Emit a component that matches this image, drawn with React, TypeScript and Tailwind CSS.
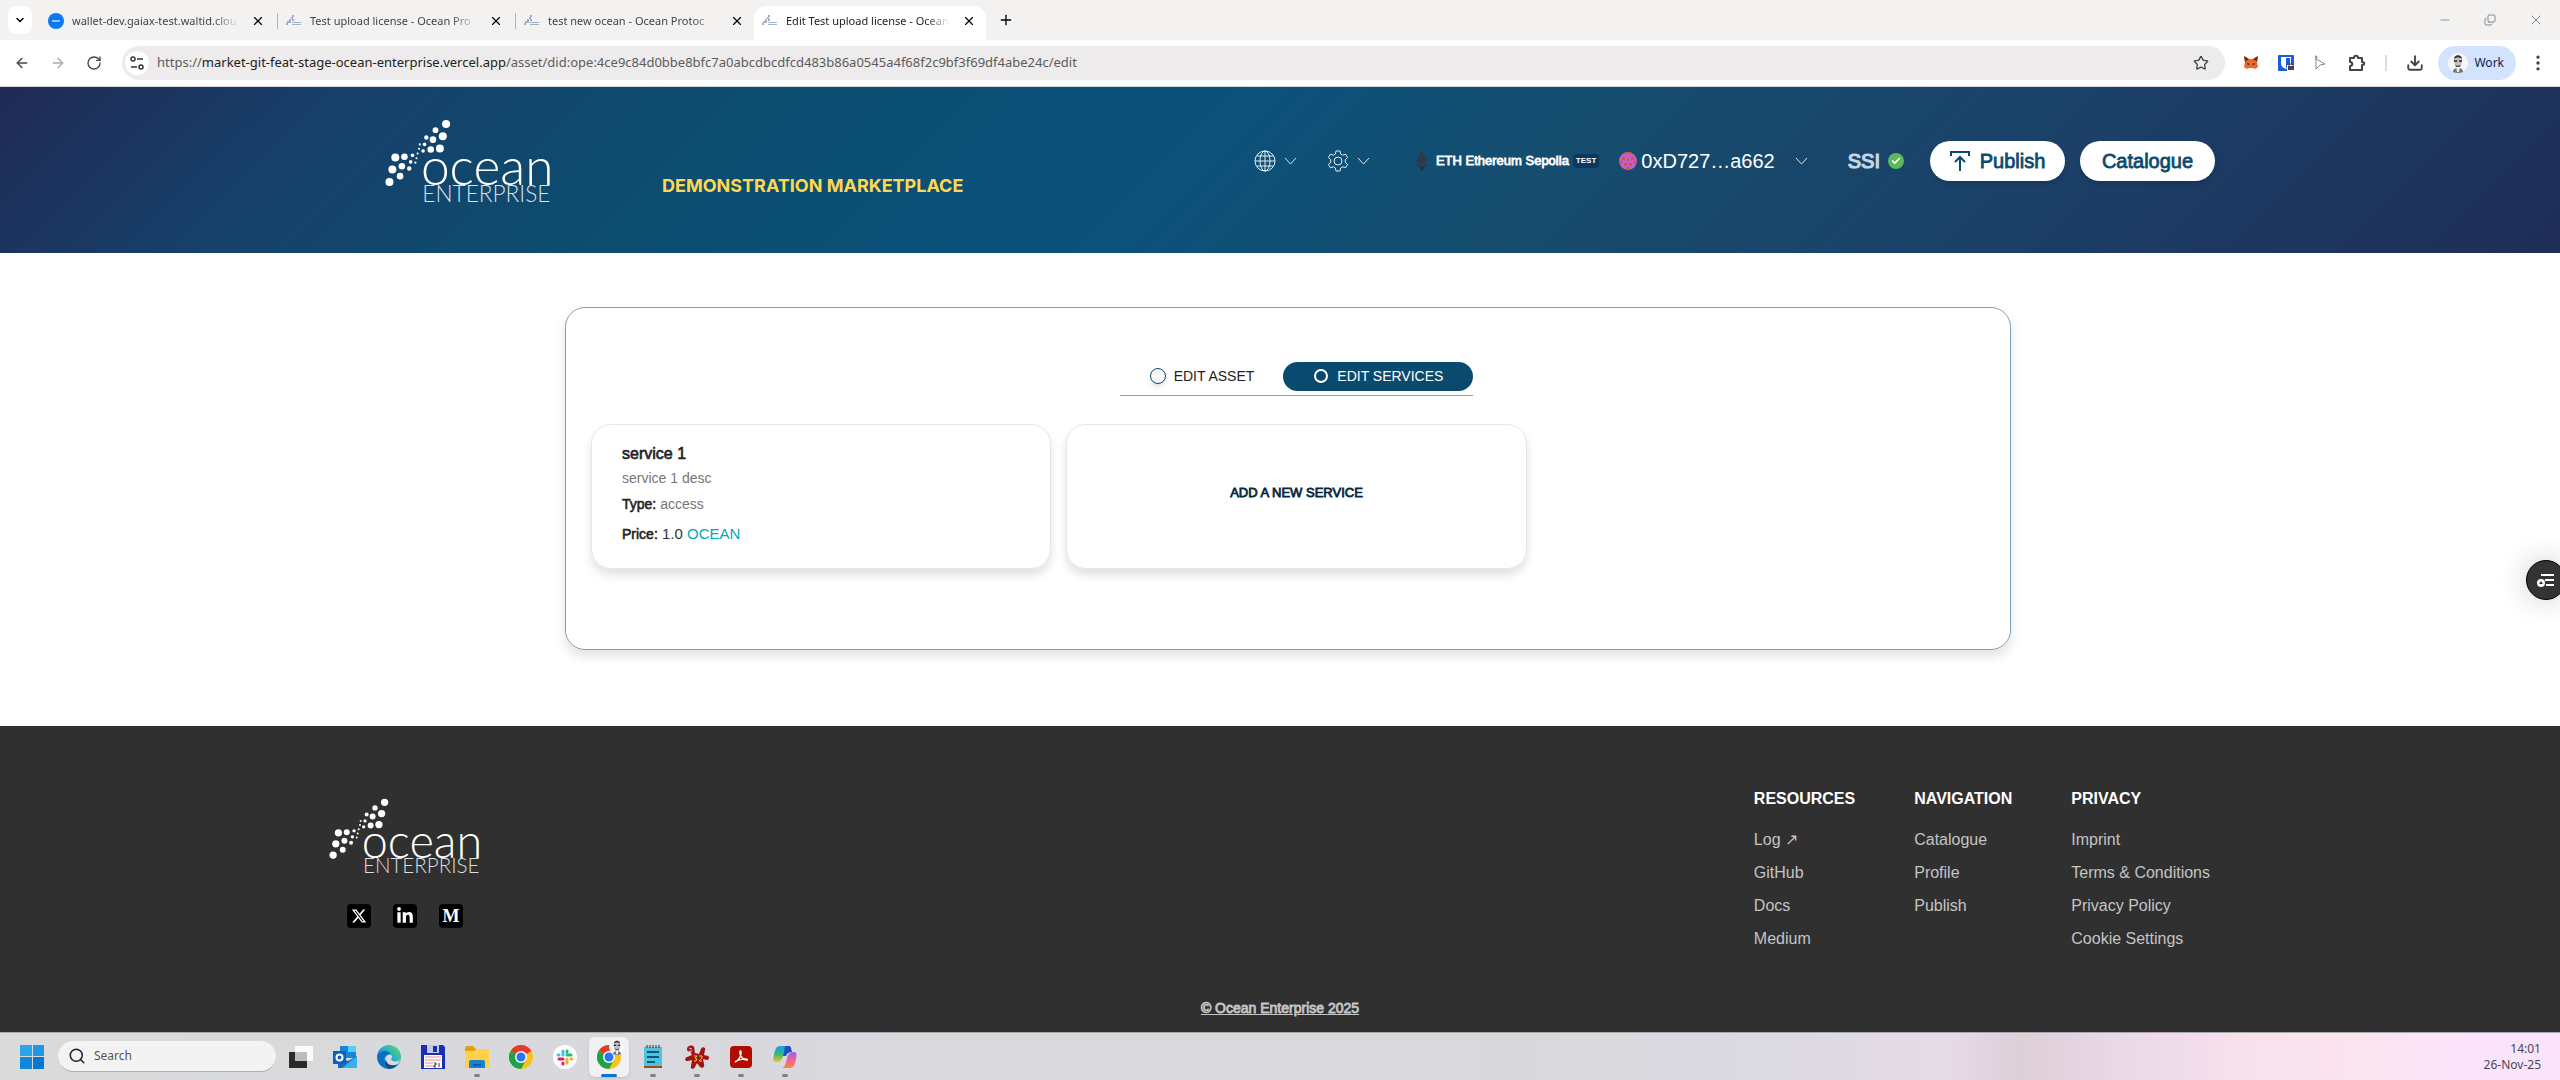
import type { ReactNode } from "react";
import {
  ArrowLeft,
  ArrowRight,
  Check,
  ChevronDown,
  Copy,
  Download,
  EllipsisVertical,
  Minus,
  Plus,
  RotateCw,
  Search,
  Star,
  X,
} from "lucide-react";
import { FaLinkedinIn, FaXTwitter } from "react-icons/fa6";

const LOGO_DOTS = [
  [255, 66, 11], [226, 83, 8], [246, 100, 11], [201, 103, 6], [219, 109, 9],
  [238, 133, 11], [213, 136, 9], [196, 122, 5], [192, 140, 5], [183, 122, 3],
  [181, 134, 3], [177, 147, 3], [174, 160, 3], [171, 172, 3], [163, 152, 5],
  [158, 170, 5], [154, 188, 6], [141, 156, 9], [134, 182, 9], [129, 209, 9],
  [116, 158, 11], [108, 191, 11], [100, 225, 11],
];

const TABS = [
  { title: "wallet-dev.gaiax-test.waltid.clou", wallet: true },
  { title: "Test upload license - Ocean Pro" },
  { title: "test new ocean - Ocean Protoc" },
  { title: "Edit Test upload license - Ocean", active: true },
];

const FOOTER_COLUMNS = [
  { title: "RESOURCES", links: ["Log ↗", "GitHub", "Docs", "Medium"] },
  { title: "NAVIGATION", links: ["Catalogue", "Profile", "Publish"] },
  {
    title: "PRIVACY",
    links: ["Imprint", "Terms & Conditions", "Privacy Policy", "Cookie Settings"],
  },
];

function OceanLogo({ className }: { className: string }) {
  return (
    <svg viewBox="85 50 460 235" className={`overflow-visible ${className}`} fill="#fff" role="img" aria-label="Ocean Enterprise">
      {LOGO_DOTS.map(([cx, cy, r]) => (
        <circle key={`${cx}-${cy}`} cx={cx} cy={cy} r={r} />
      ))}
      <text x="186" y="233" fontSize="141" fontWeight="300" fontFamily="Lato, sans-serif">
        ocean
      </text>
      <text x="190" y="280" fontSize="62" fontWeight="300" fontFamily="Lato, sans-serif" fillOpacity="0.85">
        ENTERPRISE
      </text>
    </svg>
  );
}

function OceanFavicon() {
  return (
    <svg viewBox="0 0 16 16" className="size-4 shrink-0" fill="#7f93b8">
      <circle cx="7" cy="3" r="1" />
      <circle cx="6" cy="5" r="1" />
      <circle cx="7" cy="7" r="1" />
      <circle cx="4" cy="7" r="1" />
      <circle cx="2" cy="9" r="1" />
      <circle cx="1" cy="11" r="1" />
      <circle cx="4" cy="9" r="1" />
      <path d="M6 9h9v1H6zM6 11h9v1H6z" opacity=".7" />
    </svg>
  );
}

function TabStrip() {
  return (
    <div className="flex h-10 items-end bg-[#f3f2f1] pl-2">
      <button aria-label="Search tabs" className="mr-2 mb-1.5 flex h-7 w-6 items-center justify-center rounded-lg bg-white">
        <ChevronDown className="size-3" strokeWidth={3} />
      </button>
      {TABS.map((tab, i) => (
        <div
          key={tab.title}
          className={`flex h-[34px] items-center gap-2 pr-2.5 pb-1 pl-2 ${
            tab.active ? "w-[232px] rounded-t-xl bg-white" : "w-[238px]"
          }`}
        >
          {tab.wallet ? (
            <span className="flex size-4 shrink-0 items-center justify-center rounded-full bg-[#0a78f0]">
              <span className="h-0.5 w-2 bg-[#8cc4ff]" />
            </span>
          ) : (
            <OceanFavicon />
          )}
          <span
            className={`min-w-0 flex-1 whitespace-nowrap text-[11px] [mask-image:linear-gradient(to_right,#000_85%,transparent)] ${
              tab.active ? "text-[#222]" : "text-[#444]"
            }`}
          >
            {tab.title}
          </span>
          <button aria-label="Close tab" className="ml-1 shrink-0">
            <X className="size-3.5" />
          </button>
          {i < 2 && <span className="-mr-2.5 ml-1 h-4 w-px bg-[#b5b5b5]" />}
        </div>
      ))}
      <button aria-label="New tab" className="mb-3 ml-3">
        <Plus className="size-4" />
      </button>
      <div className="mr-4 mb-3 ml-auto flex items-center gap-8 text-[#888]">
        <button aria-label="Minimize">
          <Minus className="size-3.5" strokeWidth={1.5} />
        </button>
        <button aria-label="Restore">
          <Copy className="size-3 -scale-y-100" strokeWidth={2} />
        </button>
        <button aria-label="Close">
          <X className="size-4" strokeWidth={1.5} />
        </button>
      </div>
    </div>
  );
}

function Toolbar() {
  return (
    <div className="flex h-[47px] items-center border-b border-[#d8d8d8] bg-white pr-3 pl-3.5 text-[#444]">
      <button aria-label="Back" className="mr-5">
        <ArrowLeft className="size-4" />
      </button>
      <button aria-label="Forward" className="mr-5 text-[#aaa]">
        <ArrowRight className="size-4" />
      </button>
      <button aria-label="Reload" className="mr-5">
        <RotateCw className="size-4" />
      </button>
      <div className="flex h-[34px] flex-1 items-center rounded-full bg-[#edebec] pr-4 pl-[3px]">
        <span className="mr-2 flex size-6 items-center justify-center rounded-full bg-white">
          <svg viewBox="0 0 16 16" className="size-4" fill="none" stroke="#333" strokeWidth="1.5">
            <circle cx="4" cy="4" r="2" />
            <path d="M8 4h6M2 12h6" />
            <circle cx="12" cy="12" r="2" />
          </svg>
        </span>
        <span className="flex-1 text-[13px] text-[#5c5c5c]">
          https://<span className="text-[#222]">market-git-feat-stage-ocean-enterprise.vercel.app</span>
          /asset/did:ope:4ce9c84d0bbe8bfc7a0abcdbcdfcd483b86a0545a4f68f2c9bf3f69df4abe24c/edit
        </span>
        <button aria-label="Bookmark">
          <Star className="size-4" />
        </button>
      </div>
      <div className="ml-[18px] flex items-center gap-[19px]">
        <svg viewBox="0 0 16 16" className="size-4">
          <path d="M1 1l5 3h4l5-3-1 6 1 5-3 2-2-1H6l-2 1-3-2 1-5z" fill="#f0652a" />
          <path d="M1 1l5 3-4 3zM15 1l-5 3 4 3z" fill="#7a2a18" />
          <path d="M4 8l3 1-2 1zM12 8L9 9l2 1z" fill="#222" />
        </svg>
        <svg viewBox="0 0 16 16" className="size-4">
          <rect width="16" height="16" rx="1" fill="#175ddc" />
          <path d="M3 2h10v6c0 4-3 5-5 6-2-1-5-2-5-6z" fill="#fff" />
          <path d="M8 3h4v5c0 2-2 4-4 5z" fill="#175ddc" />
          <path d="M9 10h7v6H9z" fill="#fff" />
          <path d="M10 11h6v4h-6z" fill="#444" />
          <path d="M11 11V9h4v2" fill="none" stroke="#444" />
        </svg>
        <svg viewBox="0 0 16 16" className="size-4" fill="none">
          <path d="M2 0l3 2-3 3z" fill="#b27cc4" />
          <path d="M3 4l9 5-5 1-4 4z" stroke="#888" />
        </svg>
        <svg viewBox="0 0 18 18" className="size-[18px]" fill="none" stroke="#444" strokeWidth="2">
          <path d="M2 4h4c0-3 4-3 4 0h4v4c3 0 3 3 0 3v5H2v-4c3 0 3-4 0-4z" strokeLinejoin="round" />
        </svg>
        <span className="h-4 w-0.5 bg-[#ddd]" />
        <Download className="size-[18px]" strokeWidth={2.5} />
      </div>
      <button className="ml-3.5 flex h-[34px] items-center gap-1.5 rounded-full bg-[#d3e3fd] pr-3 pl-2.5 text-xs text-[#0a2351]">
        <PersonPhoto className="size-5" />
        Work
      </button>
      <button aria-label="Menu" className="ml-3">
        <EllipsisVertical className="size-5" />
      </button>
    </div>
  );
}

function PersonPhoto({ className }: { className: string }) {
  return (
    <svg viewBox="0 0 20 20" className={className}>
      <circle cx="10" cy="10" r="10" fill="#f7f7f7" />
      <path d="M5 19c0-3 2-4 5-4s5 1 5 4c-3 1.300-7 1.300-10 0z" fill="#777" />
      <path d="M8 13h4l-1 6h-2z" fill="#eee" />
      <ellipse cx="10" cy="8" rx="4" ry="6" fill="#c4c4c4" />
      <path d="M6 6c0-5 8-5 8 0-2-2-6-2-8 0z" fill="#333" />
      <path d="M6 8h3M11 8h3" stroke="#222" strokeWidth="1.5" />
      <path d="M7 11c1 2 5 2 6 0l-1 3h-4z" fill="#555" />
    </svg>
  );
}

function Chevron() {
  return (
    <svg viewBox="0 0 13 8" className="h-2 w-[13px]" fill="none" stroke="#dce6ee">
      <path d="M1 1l5.500 6L12 1" />
    </svg>
  );
}

function SiteHeader() {
  return (
    <header className="bg-[linear-gradient(135deg,#202a54_0%,#16406a_13%,#0c4d70_28%,#0b527b_45%,#164d6f_60%,#1b4068_78%,#1f2d56_100%)] pl-[39px]">
      <div className="mx-auto flex h-[166px] max-w-[1831px] items-start justify-between text-white">
        <div className="flex">
          <a href="#home" className="mt-[31px]">
            <OceanLogo className="h-[86px] w-[168px]" />
          </a>
          <span className="mt-[87px] ml-[110px] text-lg leading-6 font-bold text-[#ffd84f] [font-family:Inter,sans-serif]">
            DEMONSTRATION MARKETPLACE
          </span>
        </div>
        <div className="mt-[54px] flex h-10 items-center">
          <button aria-label="Language" className="flex items-center gap-2">
            <svg viewBox="0 0 22 22" className="size-[22px]" fill="none" stroke="#e4edf3">
              <circle cx="11" cy="11" r="10" />
              <ellipse cx="11" cy="11" rx="5" ry="10" />
              <path d="M11 1v20M1 11h20M3 6h16M3 16h16" />
            </svg>
            <Chevron />
          </button>
          <button aria-label="Settings" className="ml-[30px] flex items-center gap-2">
            <svg viewBox="0 0 22 22" className="size-[22px]" fill="none" stroke="#e4edf3" strokeLinejoin="round">
              <circle cx="11" cy="11" r="4" />
              <path d="M9 1h4l.6 3 2 1.200 3-1 2 3.400-2.300 2v2.800l2.300 2-2 3.400-3-1-2 1.200-.6 3H9l-.6-3-2-1.200-3 1-2-3.400 2.300-2V9.600l-2.300-2 2-3.400 3 1 2-1.200z" />
            </svg>
            <Chevron />
          </button>
          <div className="ml-[46px] flex items-center">
            <svg viewBox="0 0 12 20" className="mr-2 h-5 w-3">
              <path d="M6 0l6 10-6 4-6-4z" fill="#2f3a44" />
              <path d="M0 12l6 4 6-4-6 8z" fill="#27323c" />
            </svg>
            <span className="text-[13px] [-webkit-text-stroke:0.06em]">ETH Ethereum Sepolia</span>
            <span className="ml-1 rounded-sm bg-[#073a63] px-[3px] text-[8px] leading-[14px] font-bold">TEST</span>
          </div>
          <button className="ml-5 flex items-center text-xl">
            <svg viewBox="0 0 18 18" className="mr-1 size-[18px]">
              <circle cx="9" cy="9" r="9" fill="#c45fc9" />
              <path d="M6 0h6v2H6zM3 5h3v3H3zM12 5h3v3h-3zM8 6h2v3H8zM0 9h3v3H0zM15 9h3v3h-3zM5 11h3v3H5zM10 11h3v3h-3zM7 15h4v3H7z" fill="#d4553a" />
            </svg>
            0xD727…a662
            <span className="ml-5">
              <Chevron />
            </span>
          </button>
          <span className="ml-10 text-xl text-[#c5d6e6] [-webkit-text-stroke:0.06em]">SSI</span>
          <span className="ml-2 flex size-4 items-center justify-center rounded-full bg-[#5cb85c]">
            <Check className="size-2.5" strokeWidth={4} />
          </span>
          <a href="#publish" className="ml-[26px] flex h-10 w-[135px] items-center justify-center gap-2.5 rounded-full bg-white text-xl text-[#0b4a6f] shadow-md [-webkit-text-stroke:0.04em]">
            <svg viewBox="0 0 20 22" className="h-[22px] w-5" fill="none" stroke="#0b4a6f" strokeWidth="2">
              <path d="M1 6V2h18v4M10 21V7M5 12l5-5 5 5" />
            </svg>
            Publish
          </a>
          <a href="#catalogue" className="ml-[15px] flex h-10 w-[135px] items-center justify-center rounded-full bg-white text-xl text-[#0b4a6f] shadow-md [-webkit-text-stroke:0.04em]">
            Catalogue
          </a>
        </div>
      </div>
    </header>
  );
}

function EditPanel() {
  return (
    <main className="bg-white pt-[54px] pb-[76px] pl-4">
      <section className="mx-auto max-w-[1446px] rounded-[20px] border border-[#7fa0b5] pt-[54px] pr-2 pb-20 pl-[25px] shadow-[0_6px_12px_rgba(0,0,0,0.12)]">
        <div className="mx-auto flex w-fit items-center border-b border-[#7fa0b5] pb-1 text-sm">
          <button className="flex h-[29px] items-center gap-2 pr-[29px] pb-0.5 pl-[30px] text-[#222]">
            <span className="size-4 rounded-full border border-[#0b4a6f] bg-[#f7f7f7] shadow-md" />
            EDIT ASSET
          </button>
          <button className="flex h-[29px] items-center gap-[9px] rounded-full bg-[#0b4a6f] pr-[30px] pb-0.5 pl-[31px] text-white">
            <span className="size-3.5 rounded-full border-2 border-white shadow-md" />
            EDIT SERVICES
          </button>
        </div>
        <div className="mt-[28px] grid grid-cols-3 gap-[15px]">
          <button className="flex flex-col items-start rounded-[20px] border border-[#e6e6e6] px-[30px] pt-[17px] pb-[18px] text-left shadow-[0_6px_10px_rgba(0,0,0,0.12)]">
            <span className="text-base text-[#222] [-webkit-text-stroke:0.04em]">service 1</span>
            <span className="text-sm leading-6 text-[#767676]">service 1 desc</span>
            <span className="text-sm leading-7 text-[#767676]">
              <span className="text-[#222] [-webkit-text-stroke:0.04em]">Type:</span> access
            </span>
            <span className="text-[15px] leading-8 text-[#333]">
              <span className="text-sm text-[#222] [-webkit-text-stroke:0.04em]">Price:</span> 1.0{" "}
              <span className="text-[#00a9b5]">OCEAN</span>
            </span>
          </button>
          <button className="rounded-[20px] border border-[#e6e6e6] pb-2 text-[13px] text-[#06283f] shadow-[0_6px_10px_rgba(0,0,0,0.12)] [-webkit-text-stroke:0.06em]">
            ADD A NEW SERVICE
          </button>
        </div>
      </section>
    </main>
  );
}

function SocialLink({ label, children }: { label: string; children: ReactNode }) {
  return (
    <a href="#social" aria-label={label} className="flex size-6 items-center justify-center rounded-sm bg-black">
      {children}
    </a>
  );
}

function SiteFooter() {
  return (
    <footer className="flex flex-1 flex-col bg-[#303030] text-[#c4c4c4]">
      <div className="mx-auto flex w-full max-w-[1904px] justify-between pt-[61px]">
        <div className="mt-[10px]">
          <OceanLogo className="h-[78px] w-[153px]" />
          <div className="mt-[29px] ml-[19px] flex gap-[22px] text-white">
            <SocialLink label="X">
              <FaXTwitter className="size-4" />
            </SocialLink>
            <SocialLink label="LinkedIn">
              <FaLinkedinIn className="size-[18px]" />
            </SocialLink>
            <SocialLink label="Medium">
              <span className="text-lg leading-5 font-bold [font-family:'Liberation_Serif',serif]">M</span>
            </SocialLink>
          </div>
        </div>
        <nav className="mr-[22px] flex gap-[59px]">
          {FOOTER_COLUMNS.map((column) => (
            <div key={column.title}>
              <h3 className="text-base font-bold text-white">{column.title}</h3>
              <ul className="mt-3">
                {column.links.map((link) => (
                  <li key={link} className="leading-[33px]">
                    <a href="#link">{link}</a>
                  </li>
                ))}
              </ul>
            </div>
          ))}
        </nav>
      </div>
      <a href="#home" className="mx-auto mt-auto mb-[14px] text-sm leading-5 underline [-webkit-text-stroke:0.06em]">
        © Ocean Enterprise 2025
      </a>
    </footer>
  );
}

function ChromeIcon() {
  return (
    <svg viewBox="0 0 24 24" className="size-6">
      <circle cx="12" cy="12" r="12" fill="#fbc116" />
      <path d="M12 12L1.600 6A12 12 0 0122.400 6z" fill="#e33b2e" />
      <path d="M12 12L1.600 6A12 12 0 0012 24l5-9z" fill="#1fa34a" />
      <circle cx="12" cy="12" r="6" fill="#fff" />
      <circle cx="12" cy="12" r="4.500" fill="#2a75f0" />
    </svg>
  );
}

const TASKBAR_APPS: { name: string; icon: ReactNode; open?: boolean; active?: boolean }[] = [
  {
    name: "Task view",
    icon: (
      <svg viewBox="0 0 24 24" className="size-6">
        <path d="M0 7h18v16H0z" fill="#2a2a2a" />
        <path d="M6 1h18v15H6z" fill="#fafafa" />
        <path d="M6 7h12v9H6z" fill="#bcbcbc" />
      </svg>
    ),
  },
  {
    name: "Outlook",
    icon: (
      <svg viewBox="0 0 24 24" className="size-6">
        <path d="M7 1h16v12H7z" fill="#1a84d8" />
        <path d="M15 1h8v6h-8z" fill="#50d0f8" />
        <path d="M5 11l10 5 9-5v12H5z" fill="#1568c0" />
        <path d="M24 11v12H9z" fill="#35b1ee" />
        <path d="M0 6h13v13H0z" fill="#0b62b8" />
        <circle cx="6.500" cy="12.500" r="3" fill="none" stroke="#fff" strokeWidth="2" />
      </svg>
    ),
  },
  {
    name: "Edge",
    icon: (
      <svg viewBox="0 0 24 24" className="size-6">
        <defs>
          <linearGradient id="edge" x1="0" x2="1" y1="1" y2="0">
            <stop offset="0" stopColor="#0c59a4" />
            <stop offset=".5" stopColor="#1aa8e0" />
            <stop offset="1" stopColor="#6be04f" />
          </linearGradient>
        </defs>
        <circle cx="12" cy="12" r="12" fill="url(#edge)" />
        <path d="M8 15c0-4 3-6 6-5 2 1 1 3 0 4 1 3 6 3 9 1-2 6-8 9-11 9-3-2-4-5-4-9z" fill="#d9dadf" />
        <path d="M1 10c3-5 10-5 13-1-6-1-9 5-5 12C3 21 0 15 1 10z" fill="#0f6cbd" />
        <path d="M9 14c0 5 5 8 12 5-3 4-7 5-9 5-4-2-5-6-3-10z" fill="#114a8b" />
      </svg>
    ),
  },
  {
    name: "Total Commander",
    icon: (
      <svg viewBox="0 0 24 24" className="size-6">
        <path d="M0 0h22l2 2v22H0z" fill="#1a2fb5" />
        <path d="M6 0h12v8H6z" fill="#c3cbe0" />
        <path d="M12 1h4v6h-4z" fill="#1a2fb5" />
        <path d="M3 10h18v13H3z" fill="#fff" />
        <path d="M4 12h16M4 15h16M4 18h8M4 21h8" stroke="#e88" />
        <path d="M13 18h2v2h-2v2h2M18 18v4" stroke="#333" fill="none" />
      </svg>
    ),
  },
  {
    name: "File Explorer",
    open: true,
    icon: (
      <svg viewBox="0 0 24 24" className="size-6">
        <path d="M0 3c0-1 1-2 2-2h6l3 3h12v8H0z" fill="#e0a010" />
        <path d="M0 6h9l2-2h13v18c0 1-1 1-2 1H1c-1 0-1-1-1-1z" fill="#ffd04a" />
        <path d="M4 23v-6c0-1 1-2 2-2h12c1 0 2 1 2 2v6z" fill="#1782d0" />
        <path d="M8 19h8v2H8z" fill="#0d5ca0" />
      </svg>
    ),
  },
  { name: "Chrome", icon: <ChromeIcon /> },
  {
    name: "Slack",
    icon: (
      <svg viewBox="0 0 24 24" className="size-6" strokeWidth="3" strokeLinecap="round">
        <circle cx="12" cy="12" r="12" fill="#fff" />
        <path d="M10 6v4M5 10h1" stroke="#36c5f0" />
        <path d="M14 10h4M14 6v1" stroke="#2eb67d" />
        <path d="M14 14v4M18 14h1" stroke="#ecb22e" />
        <path d="M6 14h4M10 18v1" stroke="#e01e5a" />
      </svg>
    ),
  },
  {
    name: "Chrome, Work profile",
    open: true,
    active: true,
    icon: (
      <span className="relative">
        <ChromeIcon />
        <span className="absolute -top-1.5 -right-1">
          <PersonPhoto className="size-4" />
        </span>
      </span>
    ),
  },
  {
    name: "Notepad",
    open: true,
    icon: (
      <svg viewBox="0 0 24 24" className="size-6">
        <path d="M3 2h18v19H3z" fill="#4fc3de" />
        <path d="M3 21h18v2H3z" fill="#9a4b1c" />
        <path d="M6 0v3M9 0v3M12 0v3M15 0v3M18 0v3" stroke="#135" />
        <path d="M6 7h12M6 12h12M6 17h8" stroke="#0d5570" strokeWidth="2" />
      </svg>
    ),
  },
  {
    name: "IrfanView",
    open: true,
    icon: (
      <svg viewBox="0 0 24 24" className="size-6">
        <path
          d="M2 4c0-3 5-5 7-2 1 2 0 4 1 6l4 1 2-5c1-3 5-2 4 1l-1 5 4 1c2 1 1 4-1 4l-4-1 1 5c1 3-2 5-4 3l-3-4-2 4c-1 3-5 2-4-1l1-6-4 1c-3 1-4-3-1-4l5-2-2-4c-2 1-3 0-3-2z"
          fill="#a11212"
        />
        <path d="M4 3l3 1M5 6h2" stroke="#f2c9b0" />
        <path d="M9 11h3l-2 2 2 1-1 2H9M14 11h3v2l-3 3h3" fill="none" stroke="#f5d020" />
      </svg>
    ),
  },
  {
    name: "Acrobat",
    open: true,
    icon: (
      <svg viewBox="0 0 24 24" className="size-6">
        <rect width="22" height="22" x="1" y="1" rx="4" fill="#b30b00" />
        <path d="M6 17c3-1 6-5 6-9 0-3-1-3-1 0 0 4 4 7 7 7 2-1-7-2-12 2z" fill="none" stroke="#fff" strokeWidth="1.500" />
      </svg>
    ),
  },
  {
    name: "Copilot",
    open: true,
    icon: (
      <svg viewBox="0 0 24 24" className="size-6">
        <defs>
          <linearGradient id="cpl" x1="0" x2="0" y1="0" y2="1">
            <stop offset="0" stopColor="#1e9df0" />
            <stop offset=".5" stopColor="#35b47a" />
            <stop offset="1" stopColor="#f5c51e" />
          </linearGradient>
          <linearGradient id="cpr" x1="0" x2="0" y1="0" y2="1">
            <stop offset="0" stopColor="#a060e8" />
            <stop offset=".5" stopColor="#f0609a" />
            <stop offset="1" stopColor="#f8873a" />
          </linearGradient>
        </defs>
        <path d="M7 1h8c-3 1-4 5-5 10-1 4-3 6-6 6H3c-3 0-3-3-2-7C2 5 3 1 7 1z" fill="url(#cpl)" />
        <path d="M17 23H9c3-1 4-5 5-10 1-4 3-6 6-6h1c3 0 3 3 2 7-1 5-2 9-6 9z" fill="url(#cpr)" />
        <path d="M12 1h4c2 0 2 2 3 6-3 0-5 1-6 4l-3 0c1-5 2-9 2-10z" fill="#1b4fc4" />
      </svg>
    ),
  },
];

function Taskbar() {
  return (
    <div className="flex h-12 items-center border-t border-[#a9a9ab] bg-[linear-gradient(to_right,#d9dada_0%,#d8d8de_30%,#d9d9dd_60%,#dcd9e2_70%,#e6dbe6_76%,#decfd9_79%,#ead9e6_83%,#f8e2ee_88%,#fbe4ee_92%,#fae4fb_96%,#fae4fb_100%)] pl-5 [font-family:'Noto_Sans',sans-serif]">
      <button aria-label="Start" className="grid size-6 grid-cols-2 gap-px">
        <span className="bg-[#2ba4ee]" />
        <span className="bg-[#1f96e8]" />
        <span className="bg-[#1187dc]" />
        <span className="bg-[#0678d4]" />
      </button>
      <label className="mr-[13px] ml-[14px] flex h-[31px] w-[218px] items-center gap-2 rounded-full border-b border-[#b0b0b0] bg-[#f3f3f4] pl-2.5">
        <Search className="size-[18px] shrink-0 text-[#222]" />
        <input placeholder="Search" className="w-full bg-transparent text-xs placeholder:text-[#555]" />
      </label>
      <div className="flex gap-1">
        {TASKBAR_APPS.map((app, i) => (
          <button
            key={app.name}
            aria-label={app.name}
            className={`relative flex h-10 items-center justify-center rounded-md ${
              i === 0 ? "mr-2 w-6" : "w-10"
            } ${app.active ? "bg-[#f1f1f3] shadow" : ""}`}
          >
            {app.icon}
            {app.open && (
              <span
                className={`absolute bottom-0 h-[3px] rounded-full ${
                  app.active ? "w-4 bg-[#0a74d4]" : "w-1.5 bg-[#808085]"
                }`}
              />
            )}
          </button>
        ))}
      </div>
      <div className="mr-[19px] ml-auto text-right text-xs text-[#4c4650]">
        <div>14:01</div>
        <div>26-Nov-25</div>
      </div>
    </div>
  );
}

export default function App() {
  return (
    <div className="flex min-h-screen flex-col bg-white [font-family:'Liberation_Sans',Arial,sans-serif]">
      <div className="[font-family:'Noto_Sans',sans-serif]">
        <TabStrip />
        <Toolbar />
      </div>
      <SiteHeader />
      <EditPanel />
      <SiteFooter />
      <Taskbar />
      <button
        aria-label="Preferences"
        className="fixed top-[560px] -right-1.5 flex size-10 items-center justify-center rounded-full border border-black bg-[#333] shadow-[0_0_30px_rgba(0,0,0,0.2)]"
      >
        <svg viewBox="0 0 20 16" className="h-4 w-5" stroke="#fff" strokeWidth="2">
          <path d="M5 3h13M9 8h9M10 13h8" />
          <circle cx="5" cy="11" r="4" fill="#fff" stroke="none" />
          <path d="M5 9l2 3H3z" fill="#333" stroke="none" />
        </svg>
      </button>
    </div>
  );
}
